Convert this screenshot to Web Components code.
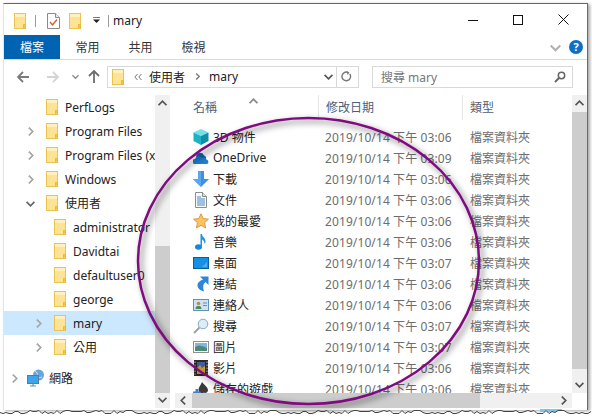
<!DOCTYPE html>
<html>
<head>
<meta charset="utf-8">
<style>
  html, body { margin: 0; width: 592px; height: 417px; overflow: hidden; background: #fff; }
  body { font: 12px "Noto Sans", "Noto Sans CJK TC", sans-serif; color: #1a1a1a; }
</style>
</head>
<body>
<win-frame>
  <title-bar slot="title">mary</title-bar>
  <ribbon-tabs slot="ribbon"></ribbon-tabs>
  <address-bar slot="address"></address-bar>
  <nav-tree slot="tree">
    <tree-row level="0">PerfLogs</tree-row>
    <tree-row level="0" arrow="right">Program Files</tree-row>
    <tree-row level="0" arrow="right">Program Files (x86)</tree-row>
    <tree-row level="0" arrow="right">Windows</tree-row>
    <tree-row level="0" arrow="down">使用者</tree-row>
    <tree-row level="1">administrator</tree-row>
    <tree-row level="1">Davidtai</tree-row>
    <tree-row level="1">defaultuser0</tree-row>
    <tree-row level="1">george</tree-row>
    <tree-row level="1" arrow="right" selected>mary</tree-row>
    <tree-row level="1" arrow="right">公用</tree-row>
    <tree-row level="-1" arrow="right" icon="network" style="margin-top:7px">網路</tree-row>
  </nav-tree>
  <file-list slot="list">
    <file-row icon="cube" date="2019/10/14 下午 03:06">3D 物件</file-row>
    <file-row icon="cloud" date="2019/10/14 下午 03:09">OneDrive</file-row>
    <file-row icon="download" date="2019/10/14 下午 03:06">下載</file-row>
    <file-row icon="doc" date="2019/10/14 下午 03:06">文件</file-row>
    <file-row icon="star" date="2019/10/14 下午 03:06">我的最愛</file-row>
    <file-row icon="music" date="2019/10/14 下午 03:06">音樂</file-row>
    <file-row icon="desktop" date="2019/10/14 下午 03:07">桌面</file-row>
    <file-row icon="link" date="2019/10/14 下午 03:06">連結</file-row>
    <file-row icon="contact" date="2019/10/14 下午 03:06">連絡人</file-row>
    <file-row icon="search" date="2019/10/14 下午 03:07">搜尋</file-row>
    <file-row icon="picture" date="2019/10/14 下午 03:07">圖片</file-row>
    <file-row icon="film" date="2019/10/14 下午 03:06">影片</file-row>
    <file-row icon="games" date="2019/10/14 下午 03:06">儲存的遊戲</file-row>
  </file-list>
</win-frame>
<torn-edge></torn-edge>
<circle-mark></circle-mark>

<script>
let icons = {
  folder: `<svg width="12" height="16" viewBox="0 0 12 16"><rect x=".5" y=".5" width="11" height="15" fill="#ffe394" stroke="#eac452"/><rect x="1" y="1" width="10" height="3" fill="#fff0bd"/><path d="M9.5 15.5v-4h2v4" fill="#f6c744" stroke="#eab93a"/></svg>`,
  check: `<svg width="13" height="16" viewBox="0 0 13 16"><path d="M.5.5h8l4 4v11H.5z" fill="#fff" stroke="#8a8a8a"/><path d="M8.5.5v4h4" fill="#eee" stroke="#8a8a8a"/><path d="M3 9l2.5 3L10 6.5" fill="none" stroke="#e2592a" stroke-width="1.4"/></svg>`,
  cube: `<svg width="16" height="16" viewBox="0 0 16 16"><path d="M8 0l7.500 3.500-7.500 3.500L.5 3.500z" fill="#72e0e6"/><path d="M.5 3.500L8 7v9l-7.500-4z" fill="#1ab4c6"/><path d="M15.500 3.500L8 7v9l7.500-4z" fill="#0f8ea6"/></svg>`,
  cloud: `<svg width="16" height="16" viewBox="0 0 16 16"><path d="M3.5 8A3.8 3.8 0 0 1 11 5.5 3 3 0 0 1 13 9H4z" fill="#1366b4"/><path d="M1 14a2.6 2.6 0 0 1 1-5 4 4 0 0 1 7-1 3 3 0 0 1 4.5 1.5A2.4 2.4 0 0 1 14 14z" fill="#1f7fd0"/></svg>`,
  download: `<svg width="16" height="16" viewBox="0 0 16 16"><path d="M5 0h6v8h5l-8 8-8-8h5z" fill="#3f8fe2"/><path d="M5 0h3v16l-8-8h5z" fill="#5ba6ec"/></svg>`,
  doc: `<svg width="16" height="16" viewBox="0 0 16 16"><path d="M2.5.5h7l4 4v11h-11z" fill="#f6f8fa" stroke="#8c8c8c"/><path d="M9.5.5v4h4" fill="#ddd" stroke="#8c8c8c"/><path d="M4 5h4M4 7h8M4 9h8M4 11h8M4 13h8" stroke="#3f8bc9"/></svg>`,
  star: `<svg width="16" height="16" viewBox="0 0 16 16"><path d="M8 .8l2.2 4.8 5.2.6-3.9 3.5 1.1 5.2L8 12.3l-4.600 2.600 1.100-5.200L.6 6.200l5.200-.6z" fill="#fdc65c" stroke="#e0934a"/></svg>`,
  music: `<svg width="16" height="16" viewBox="0 0 16 16"><ellipse cx="5.500" cy="13" rx="3.500" ry="2.800" fill="#1488dc"/><path d="M7.500 13V0h1.500c0 3 3.500 3.500 3.500 7.500 0 1-.5 2-1 2.500 .2-3-2-4.500-2.500-4.500V13z" fill="#1b94e6"/></svg>`,
  desktop: `<svg width="16" height="16" viewBox="0 0 16 16"><rect x=".5" y="2.500" width="15" height="11" fill="#1590e4" stroke="#0a5d9f"/><path d="M9 12L14 7v5z" fill="#4aaef0"/></svg>`,
  link: `<svg width="16" height="16" viewBox="0 0 16 16"><path d="M7 .5h8.500V9l-3-3c-2.500 2-3 5-1.500 9.500C5 14 3.500 10 5 7c.6-1 2.500-2.500 5-3.500z" fill="#2f86d6"/></svg>`,
  contact: `<svg width="16" height="16" viewBox="0 0 16 16"><rect x=".5" y="2.500" width="15" height="11" fill="#cfe2f1" stroke="#5f93bd"/><circle cx="5.500" cy="6.500" r="1.800" fill="#b78a5c"/><path d="M2.500 12c0-2.500 1.500-3 3-3s3 .5 3 3z" fill="#4f8a5c"/><path d="M10 6h4M10 8.500h4" stroke="#5f93bd"/></svg>`,
  search: `<svg width="16" height="16" viewBox="0 0 16 16"><circle cx="10" cy="6" r="4.800" fill="#dcedfa" stroke="#8aa8c0"/><path d="M6.500 9.500L1 15" stroke="#a0a0a0" stroke-width="2"/></svg>`,
  picture: `<svg width="16" height="16" viewBox="0 0 16 16"><rect x=".5" y="2.500" width="15" height="11" fill="#fff" stroke="#8f8f8f"/><rect x="2" y="4" width="12" height="4" fill="#7fb6e2"/><path d="M2 8l4-1.500L14 8.500V12H2z" fill="#4c8a78"/></svg>`,
  film: `<svg width="16" height="16" viewBox="0 0 16 16"><rect x="1" y="0" width="14" height="16" fill="#2a2a2a"/><path d="M2 1.500v13M14 1.500v13" stroke="#bbb" stroke-dasharray="1.500 1.500"/><rect x="4" y="2" width="8" height="12" fill="#3f5fa8"/><path d="M4 8l3-3 2 3 3-2v8H4z" fill="#d7a42c"/></svg>`,
  games: `<svg width="16" height="16" viewBox="0 0 16 16"><path d="M9 1c2 3 6 5 6 8s-3 3.500-4.500 2.500l.5 2.500H7.500l.5-2.500C6.500 12.500 5.500 11 5.500 8.500 5.500 6 8 4 9 1z" fill="#3a3a3a"/><path d="M0 10.500h2.500V8H5v2.500h2.500V13H5v2H2.500v-2H0z" fill="#3f82c8"/></svg>`,
  network: `<svg width="18" height="18" viewBox="0 0 18 18"><circle cx="11.500" cy="6" r="5.500" fill="#6aa5d8"/><path d="M8 2c2 1 3 3 2 5s3 2 5 1" fill="none" stroke="#d3e6f4"/><rect x=".5" y="6.500" width="11" height="8" fill="#3ba5ec" stroke="#4d7fa8"/><path d="M6 14.500v2M3 17h6" stroke="#5f8fb5" stroke-width="1.200"/></svg>`
};

let chevron = {
  right: (c, s) => `<svg width="${s}" height="${s}" viewBox="0 0 8 8"><path d="M2.500 .5L6 4 2.500 7.500" fill="none" stroke="${c}" stroke-width="1.500"/></svg>`,
  left: (c, s) => `<svg width="${s}" height="${s}" viewBox="0 0 8 8"><path d="M5.500 .5L2 4l3.500 3.500" fill="none" stroke="${c}" stroke-width="1.500"/></svg>`,
  down: (c, s) => `<svg width="${s}" height="${s}" viewBox="0 0 8 8"><path d="M.5 2.500L4 6l3.500-3.500" fill="none" stroke="${c}" stroke-width="1.500"/></svg>`,
  up: (c, s) => `<svg width="${s}" height="${s}" viewBox="0 0 8 8"><path d="M.5 5.500L4 2l3.500 3.500" fill="none" stroke="${c}" stroke-width="1.500"/></svg>`
};

class Base extends HTMLElement {
  constructor() {
    super();
    this.attachShadow({ mode: 'open' });
  }
}

class WinFrame extends Base {
  connectedCallback() {
    this.shadowRoot.innerHTML = `
      <style>
        :host {
          display: flex; flex-direction: column; box-sizing: border-box;
          width: 585px; height: 407px; margin: 3px 0 0 3px;
          border-top: 1px solid #1979ca; border-left: 1px solid #e4e4e4; border-right: 1px solid #6a6a6a;
          box-shadow: 2px 1px 3px rgba(0,0,0,.35); background: #fff;
        }
        .main { display: flex; flex: 1; min-height: 0; }
      </style>
      <slot name="title"></slot>
      <slot name="ribbon"></slot>
      <slot name="address"></slot>
      <div class="main"><slot name="tree"></slot><slot name="list"></slot></div>`;
  }
}

class TitleBar extends Base {
  connectedCallback() {
    this.shadowRoot.innerHTML = `
      <style>
        :host { display: flex; align-items: center; height: 31px; padding: 0 0 0 10px; flex: none; }
        .sep { width: 1px; height: 12px; background: #9a9a9a; }
        svg { display: block; }
        .txt { margin-left: 4px; color: #222; position: relative; top: 1px; font-size: 12px; }
        .ctrls { margin-left: auto; display: flex; align-items: center; padding-right: 18px; gap: 35px; }
        .drop { width: 7px; margin-left: 12px; }
        .left { display: flex; align-items: center; position: relative; top: 1px; }
      </style>
      <div class="left">
        ${icons.folder}
        <span class="sep" style="margin-left:9px"></span>
        <span style="margin-left:11px">${icons.check}</span>
        <span style="margin-left:9px">${icons.folder}</span>
        <svg class="drop" width="7" height="7" viewBox="0 0 7 7"><path d="M0 0h7" stroke="#222" stroke-width="1.200"/><path d="M0 2.500h7L3.500 6z" fill="#222"/></svg>
        <span class="sep" style="margin-left:8px"></span>
      </div>
      <span class="txt"><slot></slot></span>
      <div class="ctrls">
        <svg width="10" height="10" viewBox="0 0 10 10"><path d="M0 5.500h10" stroke="#111"/></svg>
        <svg width="10" height="10" viewBox="0 0 10 10"><rect x=".5" y=".5" width="9" height="9" fill="none" stroke="#111"/></svg>
        <svg width="11" height="11" viewBox="0 0 11 11"><path d="M.5.500l10 10M10.500.500l-10 10" stroke="#111"/></svg>
      </div>`;
  }
}

class RibbonTabs extends Base {
  connectedCallback() {
    this.shadowRoot.innerHTML = `
      <style>
        :host { display: flex; align-items: stretch; height: 24px; flex: none; border-bottom: 1px solid #dadada; }
        .tab { width: 53px; display: flex; align-items: center; justify-content: center; color: #333; font-size: 12px; }
        .file { width: 56px; background: #0063b1; color: #fff; margin-right: 1px; }
        .right { margin-left: auto; display: flex; align-items: center; gap: 8px; padding-right: 4px; }
        .help { width: 14px; height: 14px; border-radius: 50%; background: #0f6fc6; color: #fff; font-weight: 700; font-size: 11px; line-height: 14px; text-align: center; }
      </style>
      <div class="tab file">檔案</div><div class="tab">常用</div><div class="tab">共用</div><div class="tab">檢視</div>
      <div class="right">${chevron.down('#b0b0b0', 11)}<div class="help">?</div></div>`;
  }
}

class AddressBar extends Base {
  connectedCallback() {
    this.shadowRoot.innerHTML = `
      <style>
        :host { display: flex; align-items: center; height: 35px; flex: none; padding-left: 13px; padding-bottom: 2px; box-sizing: border-box; }
        svg { display: block; flex: none; }
        .box { display: flex; align-items: center; height: 22px; box-sizing: border-box; border: 1px solid #d9d9d9; }
        .path { width: 252px; margin-left: 7px; color: #222; }
        .path span { white-space: nowrap; }
        .end { margin-left: auto; display: flex; align-items: center; height: 100%; }
        .search { width: 201px; margin-left: 13px; color: #777; padding-left: 8px; }
        .search svg { margin-left: auto; margin-right: 6px; }
      </style>
      <svg width="12" height="12" viewBox="0 0 12 12"><path d="M6 1L1 6l5 5M1 6h11" fill="none" stroke="#7b7b7b" stroke-width="1.800"/></svg>
      <svg style="margin-left:18px" width="12" height="12" viewBox="0 0 12 12"><path d="M6 1l5 5-5 5M11 6H0" fill="none" stroke="#d4d4d4" stroke-width="1.800"/></svg>
      <span style="margin-left:13px">${chevron.down('#8a8a8a', 7)}</span>
      <svg style="margin-left:9px" width="12" height="13" viewBox="0 0 12 13"><path d="M1 6l5-5 5 5M6 1v12" fill="none" stroke="#6e6e6e" stroke-width="1.800"/></svg>
      <div class="box path">
        <span style="margin-left:4px">${icons.folder}</span>
        <svg style="margin-left:10px" width="8" height="8" viewBox="0 0 8 8"><path d="M3.500 1L.8 4l2.700 3M7.500 1L4.800 4l2.700 3" fill="none" stroke="#777"/></svg>
        <span style="margin-left:7px">使用者</span>
        <span style="margin-left:9px">${chevron.right('#777', 7)}</span>
        <span style="margin-left:8px">mary</span>
        <div class="end">
          ${chevron.down('#555', 9)}
          <span style="width:1px;height:100%;background:#d9d9d9;margin-left:3px"></span>
          <svg style="margin:0 6px 0 4px" width="11" height="11" viewBox="0 0 11 11"><path d="M8.800 3a4.300 4.300 0 1 1-2-1.600" fill="none" stroke="#777" stroke-width="1.400"/><path d="M5.500 0l3 1.500-2 2.500z" fill="#777"/></svg>
        </div>
      </div>
      <div class="box search">搜尋 mary
        <svg width="12" height="12" viewBox="0 0 12 12"><circle cx="7.500" cy="4.500" r="3.200" fill="none" stroke="#666" stroke-width="1.500"/><path d="M5 7l-4 4" stroke="#666" stroke-width="2"/></svg>
      </div>`;
  }
}

class ScrollBar extends Base {
  connectedCallback() {
    let a = this.getAttribute('orient') === 'h' ? 'h' : 'v';
    let before = this.getAttribute('before');
    let size = this.getAttribute('size');
    let first = a === 'h' ? 'left' : 'up';
    let last = a === 'h' ? 'right' : 'down';
    this.shadowRoot.innerHTML = `
      <style>
        :host { display: flex; flex: none; background: #f0f0f0; flex-direction: ${a === 'h' ? 'row' : 'column'}; ${a === 'h' ? 'height' : 'width'}: 15px; }
        .btn { flex: none; ${a === 'h' ? 'width' : 'height'}: 17px; display: flex; align-items: center; justify-content: center; }
        .track { flex: 1; display: flex; flex-direction: inherit; min-width: 0; min-height: 0; }
        .thumb { background: #cdcdcd; flex: none; ${a === 'h' ? 'width' : 'height'}: ${size}px; margin-${a === 'h' ? 'left' : 'top'}: ${before}px; }
      </style>
      <div class="btn">${chevron[first]('#555', 9)}</div>
      <div class="track"><div class="thumb"></div></div>
      <div class="btn">${chevron[last]('#555', 9)}</div>`;
  }
}

class NavTree extends Base {
  connectedCallback() {
    this.shadowRoot.innerHTML = `
      <style>
        :host { display: flex; flex: none; width: 171px; height: 100%; padding-right: 0; box-sizing: border-box; }
        .rows { width: 151px; flex: none; overflow: hidden; }
        scroll-bar { height: 313px; }
      </style>
      <div class="rows"><slot></slot></div>
      <scroll-bar orient="v" before="134" size="147"></scroll-bar>`;
  }
}

class TreeRow extends Base {
  connectedCallback() {
    let level = +this.getAttribute('level');
    let arrow = this.getAttribute('arrow');
    let icon = this.getAttribute('icon');
    let selected = this.hasAttribute('selected');
    let pad = level < 0 ? 6 : 22 + 8 * level;
    let glyph = '';
    if (arrow === 'right') glyph = chevron.right('#a6a6a6', 9);
    if (arrow === 'down') glyph = chevron.down('#666', 9);
    this.shadowRoot.innerHTML = `
      <style>
        :host { display: flex; align-items: center; height: 24px; white-space: nowrap; background: ${selected ? '#cce8ff' : 'transparent'}; padding-left: ${pad}px; color: #222; }
        .arrow { width: 9px; height: 9px; flex: none; margin-right: ${icon ? 8 : 11}px; }
        svg { display: block; flex: none; }
        .label { margin-left: ${icon ? 4 : 7}px; flex: none; }
      </style>
      <span class="arrow">${glyph}</span>
      ${icons[icon || 'folder']}
      <span class="label"><slot></slot></span>`;
  }
}

class FileList extends Base {
  connectedCallback() {
    this.shadowRoot.innerHTML = `
      <style>
        :host { display: grid; grid-template-columns: 397px 15px; grid-template-rows: 298px 15px; width: 412px; height: 313px; flex: none; box-sizing: border-box; }
        .pane { overflow: hidden; }
        .head { display: flex; height: 31px; box-sizing: border-box; color: #4c607a; position: relative; }
        .col { height: 25px; line-height: 25px; box-sizing: border-box; padding-left: 7px; border-right: 1px solid #e5e5e5; }
        .sort { position: absolute; left: 74px; top: -2px; }
        .corner { background: #fff; }
      </style>
      <div class="pane">
        <div class="head">
          <div class="col" style="width:144px;padding-left:18px">名稱</div>
          <div class="col" style="width:144px">修改日期</div>
          <div class="col" style="border:0">類型</div>
          <span class="sort">${chevron.up('#888', 9)}</span>
        </div>
        <slot></slot>
      </div>
      <scroll-bar orient="v" before="0" size="257"></scroll-bar>
      <scroll-bar orient="h" before="0" size="288"></scroll-bar>
      <div class="corner"></div>`;
  }
}

class FileRow extends Base {
  connectedCallback() {
    let date = this.getAttribute('date');
    let icon = this.getAttribute('icon');
    this.shadowRoot.innerHTML = `
      <style>
        :host { display: flex; align-items: center; height: 21px; white-space: nowrap; }
        .name { width: 150px; box-sizing: border-box; padding-left: 18px; display: flex; align-items: center; color: #222; flex: none; }
        .name span { margin-left: 4px; }
        svg { display: block; flex: none; }
        .date { width: 145px; color: #6d6d6d; flex: none; letter-spacing: .1px; }
        .type { color: #6d6d6d; }
      </style>
      <div class="name">${icons[icon]}<span><slot></slot></span></div>
      <div class="date">${date}</div>
      <div class="type">檔案資料夾</div>`;
  }
}

class TornEdge extends Base {
  connectedCallback() {
    // jagged cut along the bottom of the capture
    let d = 'M0 413';
    let seed = 7;
    for (let x = 0; x <= 592; x += 3) {
      seed = (seed * 31 + 11) % 97;
      d += ` L${x} ${410.5 + seed % 4}`;
    }
    this.shadowRoot.innerHTML = `
      <style>
        :host { display: block; position: absolute; left: 0; top: 0; width: 592px; height: 417px; pointer-events: none; }
        svg { display: block; }
      </style>
      <svg width="592" height="417">
        <rect x="540" y="409" width="22" height="3" fill="#7cc6ee"/>
        <path d="${d} L592 417 L0 417 Z" fill="#fff"/>
        <path d="${d}" fill="none" stroke="#444" stroke-width="1"/>
      </svg>`;
  }
}

class CircleMark extends Base {
  connectedCallback() {
    this.shadowRoot.innerHTML = `
      <style>
        :host { display: block; position: absolute; left: 0; top: 0; width: 592px; height: 417px; pointer-events: none; }
        svg { display: block; overflow: visible; }
        ellipse { filter: drop-shadow(3px 3px 3px rgba(0,0,0,.6)); }
      </style>
      <svg width="592" height="417"><ellipse cx="308.500" cy="261" rx="170.500" ry="143" fill="none" stroke="#800a80" stroke-width="2.500"/></svg>`;
  }
}

customElements.define('win-frame', WinFrame);
customElements.define('title-bar', TitleBar);
customElements.define('ribbon-tabs', RibbonTabs);
customElements.define('address-bar', AddressBar);
customElements.define('scroll-bar', ScrollBar);
customElements.define('nav-tree', NavTree);
customElements.define('tree-row', TreeRow);
customElements.define('file-list', FileList);
customElements.define('file-row', FileRow);
customElements.define('torn-edge', TornEdge);
customElements.define('circle-mark', CircleMark);
</script>
</body>
</html>
